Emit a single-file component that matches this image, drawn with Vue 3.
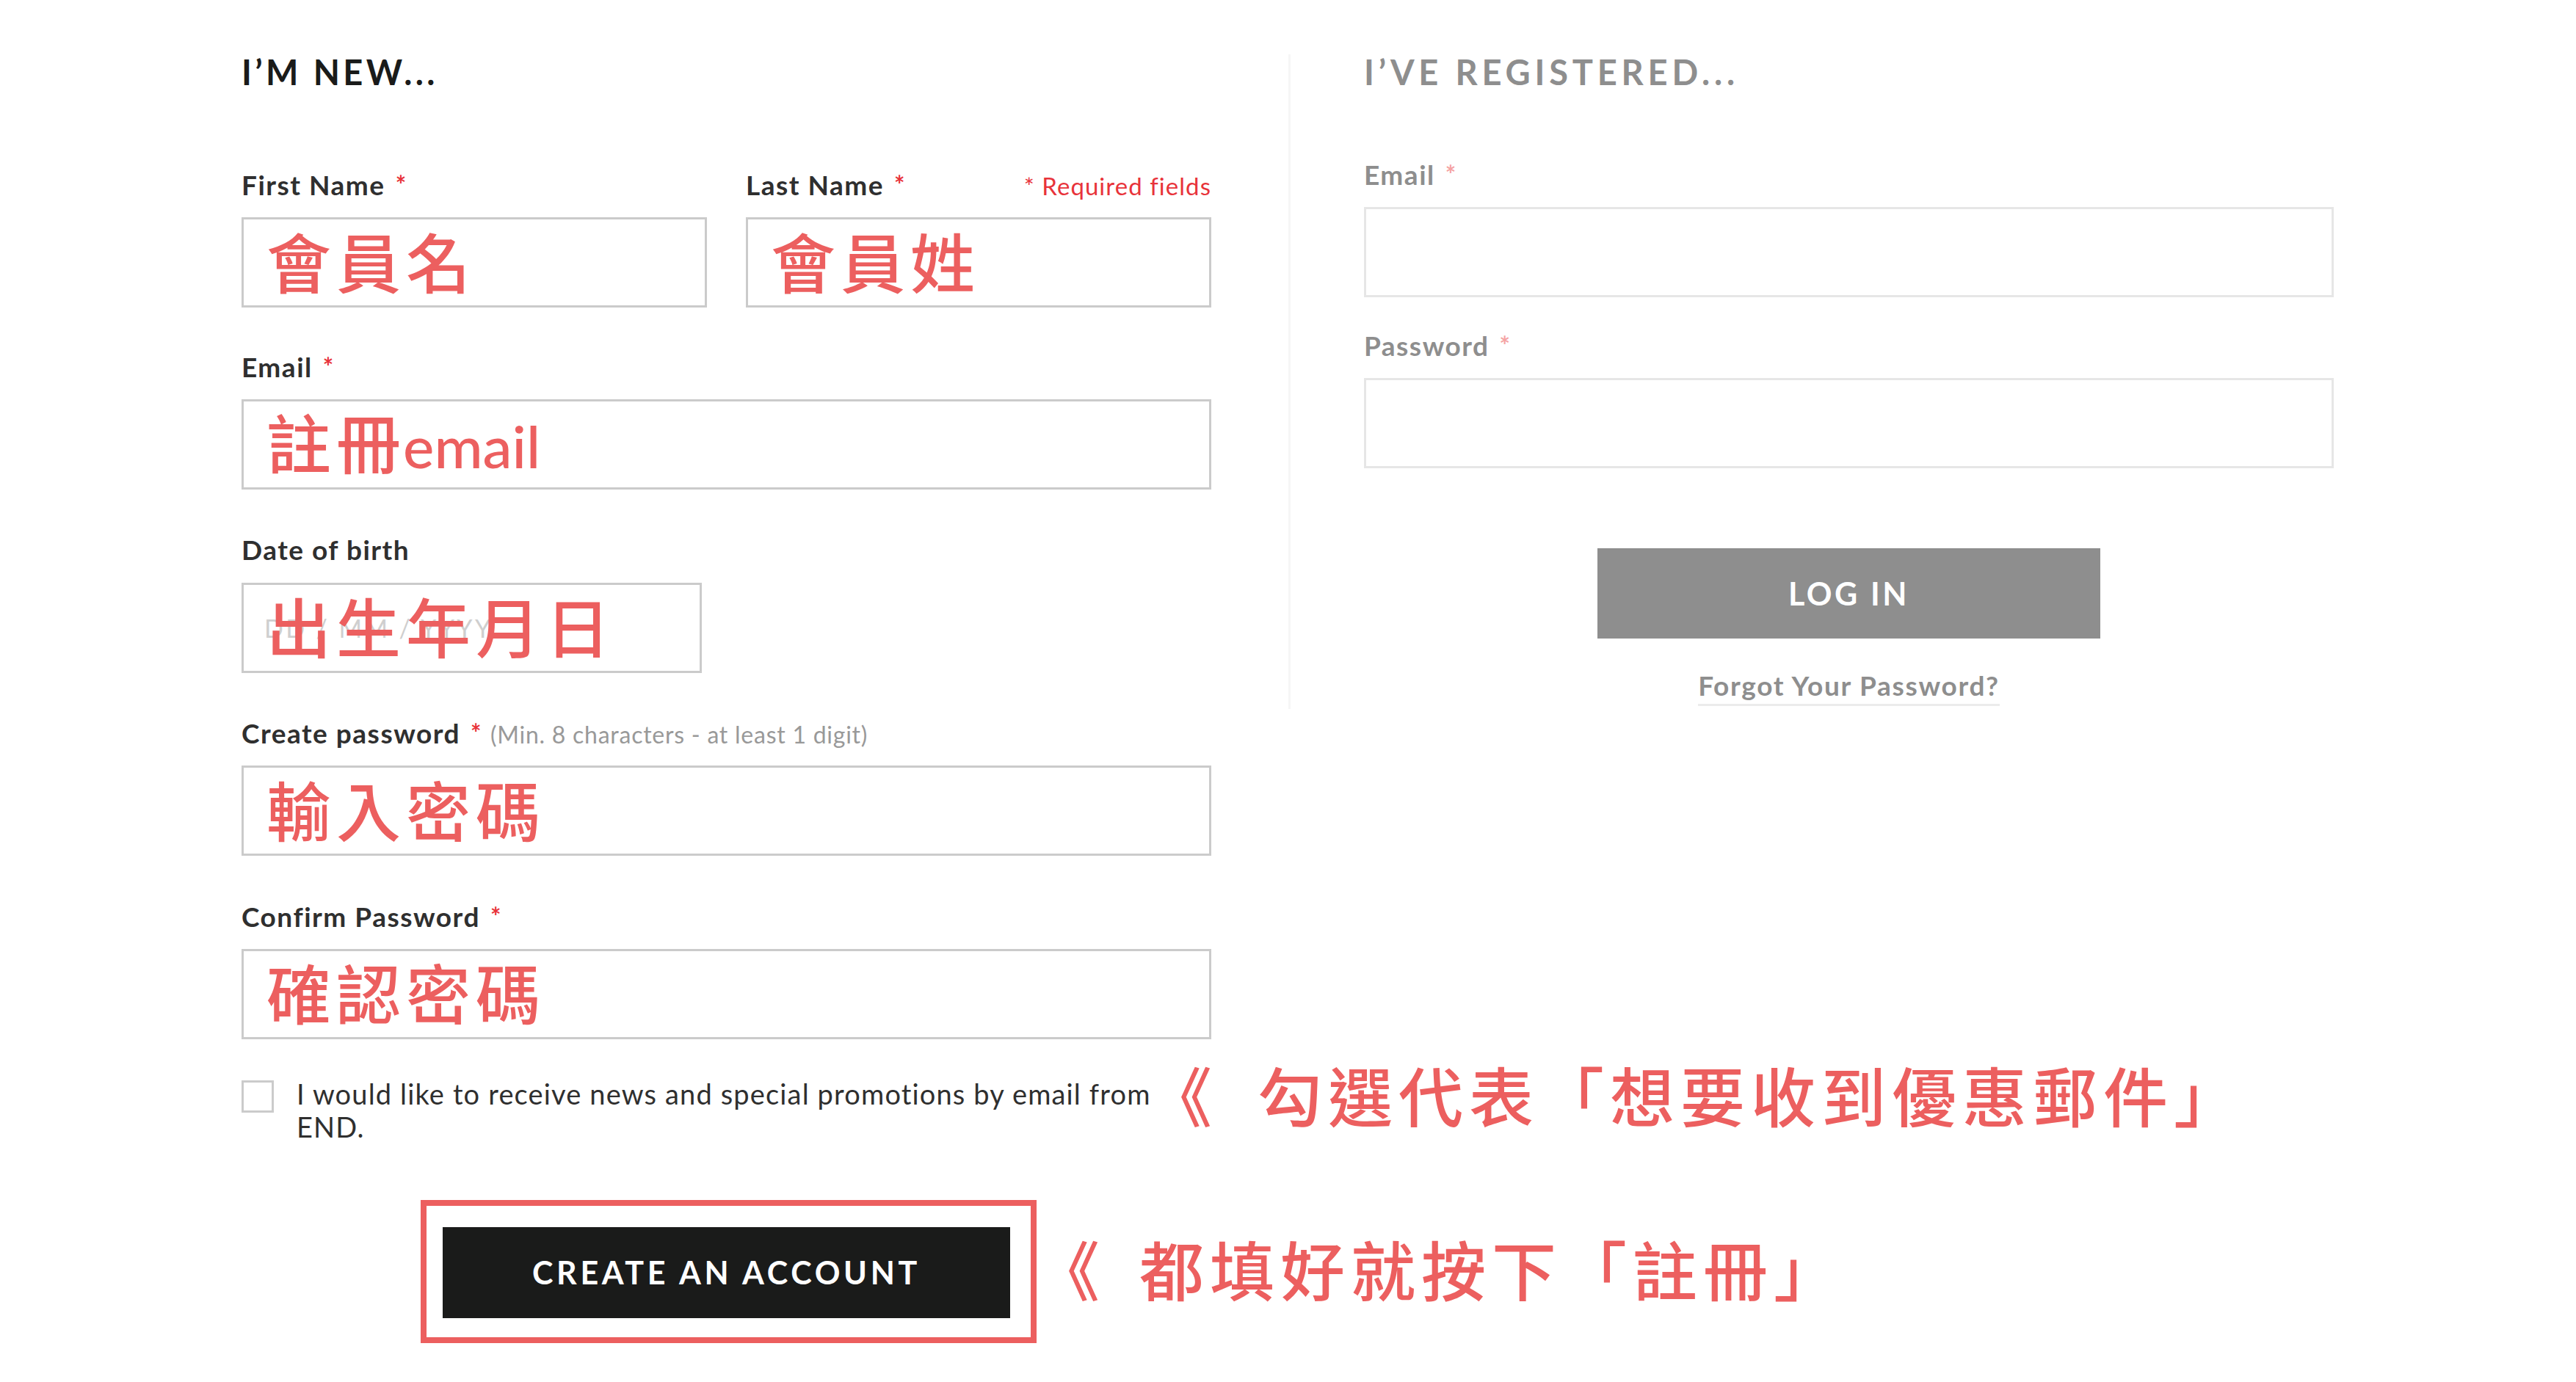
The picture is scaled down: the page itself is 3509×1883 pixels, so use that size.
<script setup>
</script>

<template>
  <div class="page">
    <section class="left">
      <h2 class="heading dark">I’M NEW...</h2>

      <div class="pair">
        <div class="field half">
          <label class="label">First Name<span class="star">*</span></label>
          <div class="box"><span class="mark">會員名</span></div>
        </div>
        <div class="field half">
          <div class="label-row">
            <label class="label">Last Name<span class="star">*</span></label>
            <span class="required">* Required fields</span>
          </div>
          <div class="box"><span class="mark">會員姓</span></div>
        </div>
      </div>

      <div class="field">
        <label class="label">Email<span class="star">*</span></label>
        <div class="box"><span class="mark">註冊<span class="latin">email</span></span></div>
      </div>

      <div class="field dob">
        <label class="label">Date of birth</label>
        <div class="box">
          <span class="placeholder">DD / MM / YYYY</span>
          <span class="mark">出生年月日</span>
        </div>
      </div>

      <div class="field">
        <label class="label">Create password<span class="star">*</span><span class="hint">(Min. 8 characters - at least 1 digit)</span></label>
        <div class="box"><span class="mark">輸入密碼</span></div>
      </div>

      <div class="field">
        <label class="label">Confirm Password<span class="star">*</span></label>
        <div class="box"><span class="mark">確認密碼</span></div>
      </div>

      <div class="consent">
        <span class="check"></span>
        <p class="consent-text">I would like to receive news and special promotions by email from END.</p>
        <span class="note note-top"><span class="quote quote-top">《</span>勾選代表「想要收到優惠郵件」</span>
      </div>

      <div class="submit-row">
        <div class="highlight">
          <button class="btn create">CREATE AN ACCOUNT</button>
        </div>
        <span class="note note-bottom"><span class="quote quote-bottom">《</span>都填好就按下「註冊」</span>
      </div>
    </section>

    <section class="right">
      <h2 class="heading gray">I’VE REGISTERED...</h2>
      <div class="r-field">
        <label class="label muted">Email<span class="star pale">*</span></label>
        <div class="box pale-box"></div>
      </div>
      <div class="r-field">
        <label class="label muted">Password<span class="star pale">*</span></label>
        <div class="box pale-box"></div>
      </div>
      <button class="btn login">LOG IN</button>
      <a class="forgot">Forgot Your Password?</a>
    </section>
  </div>
</template>

<style>
html, body { margin: 0; background: #fff; }
</style>

<style scoped>
.page {
  width: 3509px;
  height: 1883px;
  box-sizing: border-box;
  padding: 0 0 0 329px;
  display: flex;
  align-items: flex-start;
  overflow: hidden;
  background: #fff;
  font-family: "Lato", "Noto Sans", "Noto Sans CJK TC", sans-serif;
  color: #2b2b2b;
}
.left {
  width: 1321px;
  flex: none;
  padding-top: 70px;
  position: relative;
}
.heading {
  margin: 0;
  height: 56px;
  line-height: 56px;
  font-size: 47px;
  font-weight: 700;
}
.dark { color: #1a1b1a; letter-spacing: 4.4px; }
.gray { color: #8e8e8e; letter-spacing: 5.8px; }
.pair {
  display: flex;
  justify-content: space-between;
  margin-top: 105px;
}
.half { width: 634px; margin-top: 0 !important; }
.field { margin-top: 61.5px; }
.pair + .field { margin-top: 60px; }
.label-row {
  display: flex;
  justify-content: space-between;
  align-items: baseline;
}
.label {
  display: block;
  height: 44px;
  line-height: 40px;
  margin-bottom: 21px;
  font-size: 37px;
  font-weight: 700;
  letter-spacing: 1.5px;
  color: #2f2f2f;
  white-space: nowrap;
}
.star {
  color: #e8333a;
  margin-left: 14px;
  font-size: 34px;
  vertical-align: 2px;
}
.required {
  font-size: 33px;
  font-weight: 400;
  letter-spacing: 1.05px;
  color: #e8333a;
}
.hint {
  margin-left: 11px;
  font-size: 32px;
  font-weight: 400;
  letter-spacing: .75px;
  color: #999;
}
.box {
  position: relative;
  height: 123px;
  box-sizing: border-box;
  border: 3px solid #cbcbcb;
  display: flex;
  align-items: center;
  padding: 0 0 8px 31px;
}
.dob .box { width: 627px; }
.mark {
  position: relative;
  font-family: "Noto Sans CJK TC", sans-serif;
  font-size: 88px;
  font-weight: 500;
  letter-spacing: 7px;
  line-height: 1;
  color: #ec5f5f;
  white-space: nowrap;
}
.latin {
  font-family: "Lato", sans-serif;
  letter-spacing: 0;
  font-size: 80px;
  margin-left: -4px;
}
.placeholder {
  position: absolute;
  left: 28px;
  top: 0;
  bottom: 0;
  display: flex;
  align-items: center;
  font-size: 34px;
  letter-spacing: 3.4px;
  color: #cfcfcf;
}
.consent {
  position: relative;
  display: flex;
  align-items: flex-start;
  margin-top: 56px;
}
.check {
  flex: none;
  width: 44px;
  height: 44px;
  box-sizing: border-box;
  border: 3px solid #cbcbcb;
  margin-right: 31px;
}
.consent-text {
  margin: -4px 0 0;
  width: 1180px;
  font-size: 38px;
  line-height: 45px;
  letter-spacing: 1.15px;
  color: #2f2f2f;
}
.note {
  position: absolute;
  font-family: "Noto Sans CJK TC", sans-serif;
  font-size: 88px;
  font-weight: 500;
  letter-spacing: 8px;
  line-height: 1;
  color: #ec5f5f;
  white-space: nowrap;
}
.quote-top { margin-right: 54px; }
.quote-bottom { margin-right: 46px; }
.note-top { left: 1234px; top: -26px; }
.submit-row {
  position: relative;
  margin-top: 77px;
}
.highlight {
  margin-left: 244px;
  width: 839px;
  height: 195px;
  box-sizing: border-box;
  border: 8px solid #ec5f5f;
  padding: 29px 28px 26px 22px;
}
.btn {
  display: block;
  border: 0;
  padding: 0;
  color: #fff;
  font-family: "Lato", "Noto Sans", sans-serif;
  font-weight: 700;
}
.create {
  width: 773px;
  height: 124px;
  background: #1a1b1a;
  font-size: 43px;
  letter-spacing: 4.7px;
}
.note-bottom { left: 1081px; top: 48px; }
.right {
  flex: none;
  width: 1424px;
  margin-left: 105px;
  margin-top: 74px;
  height: 892px;
  box-sizing: border-box;
  border-left: 3px solid #f6f6f6;
  padding: 0 0 0 100px;
  position: relative;
  display: flex;
  flex-direction: column;
}
.right .heading { margin-top: -4px; }
.r-field { width: 1321px; }
.r-field + .r-field { margin-top: 45px; }
.heading + .r-field { margin-top: 91px; }
.muted { color: #8e8e8e; }
.pale { color: #f5a3a3; }
.pale-box { border-color: #e6e6e6; }
.login {
  align-self: center;
  width: 685px;
  height: 123px;
  margin-top: 109px;
  background: #8e8e8e;
  font-size: 43px;
  letter-spacing: 3.6px;
}
.forgot {
  align-self: center;
  margin-top: 42px;
  height: 47px;
  line-height: 44px;
  font-size: 37px;
  font-weight: 700;
  letter-spacing: 1.7px;
  color: #8e8e8e;
  border-bottom: 3px solid #ececec;
}
</style>
